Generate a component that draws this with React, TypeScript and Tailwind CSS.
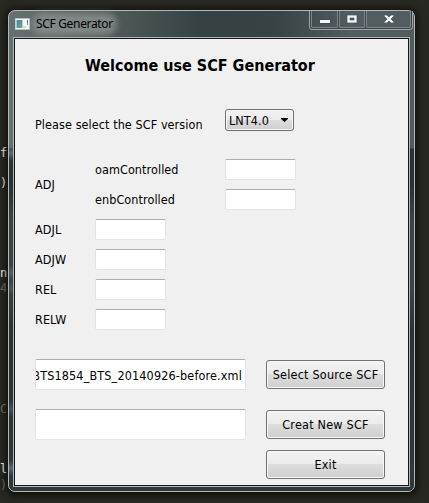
import type { ReactNode } from 'react';

const gutter = ['f', '', ')', '', '', '', '', '', 'n', '4', '', '', '', '', '', '', '', 'C', '', '', '', 'l', ')'];
const dimGutter = new Set([9, 17, 22]);

function Field({ className = 'w-[71px] h-[21px]', children }: { className?: string; children?: ReactNode }) {
  return (
    <div className={`${className} flex shrink-0 items-center justify-end overflow-hidden rounded-[2px] border border-[#e2e3ea] border-t-[#abadb3] bg-white`}>
      {children}
    </div>
  );
}

function Button({ className, children }: { className?: string; children: ReactNode }) {
  return (
    <button
      className={`${className ?? ''} flex h-[29px] w-[119px] shrink-0 items-center justify-center whitespace-nowrap rounded-[3px] border border-[#707070] bg-[linear-gradient(#f2f2f2_0%,#ebebeb_49%,#dddddd_50%,#cfcfcf_100%)] tracking-[0.22px] shadow-[inset_0_0_0_1px_#f8f8f8]`}
    >
      {children}
    </button>
  );
}

function TitleBar() {
  return (
    <div className="flex h-[26px] justify-between">
      <div className="flex h-[26px] items-center pl-[6px]">
        <svg className="shrink-0" width="15" height="12" viewBox="0 0 15 12">
          <defs>
            <linearGradient id="appIcon" x1="0" y1="0" x2="1" y2="1">
              <stop offset="0" stopColor="#4f80b0" />
              <stop offset="1" stopColor="#67b27c" />
            </linearGradient>
          </defs>
          <rect width="15" height="12" fill="#b5bcc0" />
          <rect x="0.7" y="1" width="13.6" height="10" fill="#f8fafa" />
          <rect x="1.5" y="2" width="6" height="8" fill="url(#appIcon)" />
          <rect x="8" y="8" width="3" height="2" fill="#d3d8da" />
          <rect x="12" y="2" width="1" height="3" fill="#4377a0" />
          <rect x="12" y="5" width="1" height="2" fill="#65a37d" />
        </svg>
        <span className="ml-[6px] whitespace-nowrap rounded-full bg-[#899090]/80 font-['Noto_Sans'] text-[12px] leading-[14px] tracking-[-0.33px] text-black shadow-[0_0_6px_4px_rgba(137,144,144,0.8)]">
          SCF Generator
        </span>
      </div>
      <svg className="shrink-0" width="105" height="20" viewBox="0 0 105 20">
        <path d="M.5 0V16Q.5 18.5 3 18.5H101Q103.5 18.5 103.5 16V0" fill="none" stroke="#9da4a5" />
        <path d="M2.5 0V16.5H28.5V0M30.5 0V16.5H55.5V0M57.5 0V16.5H101.5V0" fill="none" stroke="#7c8587" />
        <path d="M1.5 0V16L3 17.5H101L102.5 16V0M29.5 0V17M56.5 0V17" fill="none" stroke="#3b4547" />
        <rect x="10.5" y="8.5" width="11" height="4" fill="#f6f6f8" stroke="#454b61" />
        <path d="M38 4h10v8H38zM41 7v2h4V7z" fill="#f6f6f8" fillRule="evenodd" stroke="#454b61" strokeWidth=".7" />
        <path d="M75 4h3l2 2 2-2h3v1l-3 3 3 3v1h-3l-2-2-2 2h-3v-1l3-3-3-3z" fill="#f6f6f8" stroke="#454b61" strokeWidth=".7" />
      </svg>
    </div>
  );
}

export default function App() {
  return (
    <div className="flex h-[503px] w-[429px] overflow-hidden bg-[#282822] font-['DejaVu_Sans_Condensed','DejaVu_Sans',sans-serif] text-[12.5px] leading-[15px] tracking-[0.08px] text-black [font-stretch:condensed]">
      <div className="w-[8px] shrink-0 overflow-hidden pt-[145.5px] font-['DejaVu_Sans_Mono',monospace] text-[12px]">
        {gutter.map((ch, i) => (
          <div key={i} className={`h-[15.1px] ${dimGutter.has(i) ? 'text-[#75715e]' : 'text-[#f0f0e8]'}`}>{ch}</div>
        ))}
      </div>
      <div className="mt-[10px] flex h-[482px] w-[407px] shrink-0 flex-col rounded-[7px] border border-[#b3b9ba] bg-[linear-gradient(90deg,#687171_0%,#4b5555_30%,#354043_48%,#394244_66%,#535d60_85%,#525c5f_100%)] shadow-[0_1px_7px_2px_rgba(0,0,0,0.7)]">
        <div className="flex h-full flex-col rounded-[6px] bg-[linear-gradient(transparent_134px,#5f6b73_142px,transparent_150px,transparent_254px,#566067_262px,transparent_269px,#4a5354_277px,transparent_284px,transparent_390px,#465055_398px,transparent_406px,transparent_449px,#5b6970_457px,transparent_465px),linear-gradient(transparent_0px,transparent_137px,#2b3233_138px,#2b3233_175px,#3c4344_210px,#3c4344_275px,#2b3233_320px,#30383a_100%)] bg-[size:4px_100%,100%_100%] bg-no-repeat">
          <TitleBar />
          <div className="mx-[4px] h-[450px] border border-[#afb5b6]">
            <main className="flex h-[448px] flex-col border border-[#141819] bg-[#f0f0f0] pl-[20px]">
              <h1 className="ml-[50px] mt-[17px] h-[20px] whitespace-nowrap text-[16px] font-bold leading-[20px] tracking-normal">Welcome use SCF Generator</h1>
              <div className="mt-[33px] flex h-[22px]">
                <span className="mt-[8px] w-[190px] whitespace-nowrap">Please select the SCF version</span>
                <div className="flex h-[22px] w-[69px] items-center justify-between rounded-[3px] border border-[#707070] bg-[linear-gradient(#f2f2f2_0%,#ebebeb_49%,#dddddd_50%,#cfcfcf_100%)] pl-[3px] pr-[5px] shadow-[inset_0_0_0_1px_#f8f8f8]">
                  <span>LNT4.0</span>
                  <svg width="7" height="4" viewBox="0 0 7 4"><path d="M0 0h7v1L3.5 4 0 1z" /></svg>
                </div>
              </div>
              <div className="mt-[28px] flex h-[51px]">
                <span className="mt-[18px] w-[60px]">ADJ</span>
                <div className="flex flex-col gap-[9px]">
                  {['oamControlled', 'enbControlled'].map((label) => (
                    <div key={label} className="flex h-[21px] items-center">
                      <span className="w-[130px]">{label}</span>
                      <Field />
                    </div>
                  ))}
                </div>
              </div>
              <div className="mt-[9px] flex flex-col gap-[9px]">
                {['ADJL', 'ADJW', 'REL', 'RELW'].map((label) => (
                  <div key={label} className="flex h-[21px] items-center">
                    <span className="w-[60px]">{label}</span>
                    <Field />
                  </div>
                ))}
              </div>
              <div className="mt-[29px] flex">
                <div className="flex w-[231px] flex-col gap-[19px]">
                  <Field className="h-[31px] w-[211px] pr-[3px] pt-px">
                    <span className="whitespace-nowrap tracking-[0.15px]">BTS1854_BTS_20140926-before.xml</span>
                  </Field>
                  <Field className="h-[31px] w-[211px]" />
                </div>
                <div className="flex flex-col pt-px">
                  <Button>Select Source SCF</Button>
                  <Button className="mt-[21px]">Creat New SCF</Button>
                  <Button className="mt-[11px]">Exit</Button>
                </div>
              </div>
            </main>
          </div>
        </div>
      </div>
    </div>
  );
}
